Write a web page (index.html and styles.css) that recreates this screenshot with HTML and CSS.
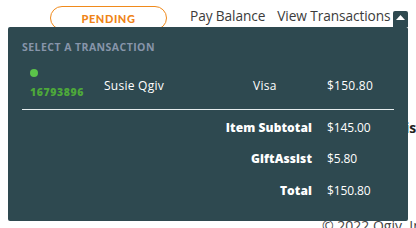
FILE: index.html
```html
<!DOCTYPE html>
<html>
<head>
<meta charset="utf-8">
<link rel="stylesheet" href="styles.css">
</head>
<body>
<div class="page">
  <header class="topbar">
    <span class="pill">PENDING</span>
    <nav class="nav">
      <a class="nav-link">Pay Balance</a>
      <a class="nav-link">View Transactions</a>
      <span class="caret"><svg width="9" height="5" viewBox="0 0 9 5"><path d="M0 5 L4.5 0 L9 5 Z" fill="#fff"/></svg></span>
    </nav>
  </header>
  <main class="behind">
    <p class="behind-text">is</p>
  </main>
  <footer class="footer">© 2022 Qgiv, Inc.</footer>

  <div class="panel">
    <div class="panel-title">SELECT A TRANSACTION</div>
    <div class="grid">
      <div class="id-cell"><span class="dot"></span><span class="tid">16793896</span></div>
      <div class="cell">Susie Qgiv</div>
      <div class="cell">Visa</div>
      <div class="cell">$150.80</div>
      <div class="rule"></div>
      <div class="label">Item Subtotal</div>
      <div class="amount">$145.00</div>
      <div class="label">GiftAssist</div>
      <div class="amount">$5.80</div>
      <div class="label">Total</div>
      <div class="amount">$150.80</div>
    </div>
  </div>
</div>
</body>
</html>
```

FILE: styles.css
```css
* { box-sizing: border-box; }
html, body { margin: 0; padding: 0; background: #fff; }
body { font-family: "Open Sans", "Liberation Sans", sans-serif; width: 416px; height: 228px; overflow: hidden; }
.page { position: relative; width: 416px; height: 228px; overflow: hidden; }

.topbar { display: flex; align-items: center; height: 26px; padding-top: 6px; }
.pill {
  margin-left: 50px; width: 117px; height: 24px;
  border: 1px solid #f08a1c; border-radius: 12px;
  display: flex; align-items: center; justify-content: center;
  color: #ef8417; font-family: "Lato", sans-serif; font-weight: 900; font-size: 11px; letter-spacing: 0.6px;
  position: relative; top: 2px;
}
.nav { display: flex; align-items: center; margin-left: 23px; gap: 0; }
.nav-link { color: #3b3b3b; font-size: 13.7px; line-height: 18px; letter-spacing: -0.1px; }
.nav-link + .nav-link { margin-left: 12px; }
.caret {
  width: 15px; height: 16px; margin-left: 3px; margin-top: 5px;
  background: #2e4950; border-radius: 2px 2px 0 0;
  display: flex; justify-content: center; padding-top: 4px;
}
.caret svg { display: block; }

.behind { height: 150px; }
.behind-text { margin: 92px 0 0 405px; font-size: 14px; font-weight: 700; color: #222; }
.footer { position: absolute; left: 322px; top: 216px; font-size: 14px; color: #444; white-space: nowrap; }

.panel {
  position: absolute; left: 8px; top: 27px; width: 400px; height: 194px;
  background: #2e4950; border-radius: 2px;
  padding: 14px 14px 0 14px;
  font-family: "Open Sans", "Liberation Sans", sans-serif;
}
.panel-title { color: #8795aa; font-weight: 700; font-size: 10.5px; letter-spacing: 0.45px; line-height: 12px; }

.grid {
  display: grid;
  grid-template-columns: 82px 149px 74px 67px;
  margin-top: 16px;
  color: #fff; font-size: 12px;
}
.id-cell { display: flex; flex-direction: column; padding-left: 8px; }
.dot { width: 8px; height: 8px; border-radius: 50%; background: #5bc34a; }
.tid { color: #4da83a; font-weight: 800; font-size: 10.5px; letter-spacing: 0.6px; margin-top: 9px; line-height: 12px; }
.cell { padding-top: 9px; line-height: 15px; letter-spacing: 0.25px; }
.rule { grid-column: 1 / 5; height: 1px; background: #e6ecee; margin-top: 11px; }
.label { grid-column: 1 / 4; text-align: right; padding-right: 15px; font-weight: 800; line-height: 15px; margin-top: 9.5px; margin-bottom: 7px; letter-spacing: 0.1px; }
.amount { line-height: 15px; margin-top: 9.5px; margin-bottom: 7px; letter-spacing: -0.1px; }
```
